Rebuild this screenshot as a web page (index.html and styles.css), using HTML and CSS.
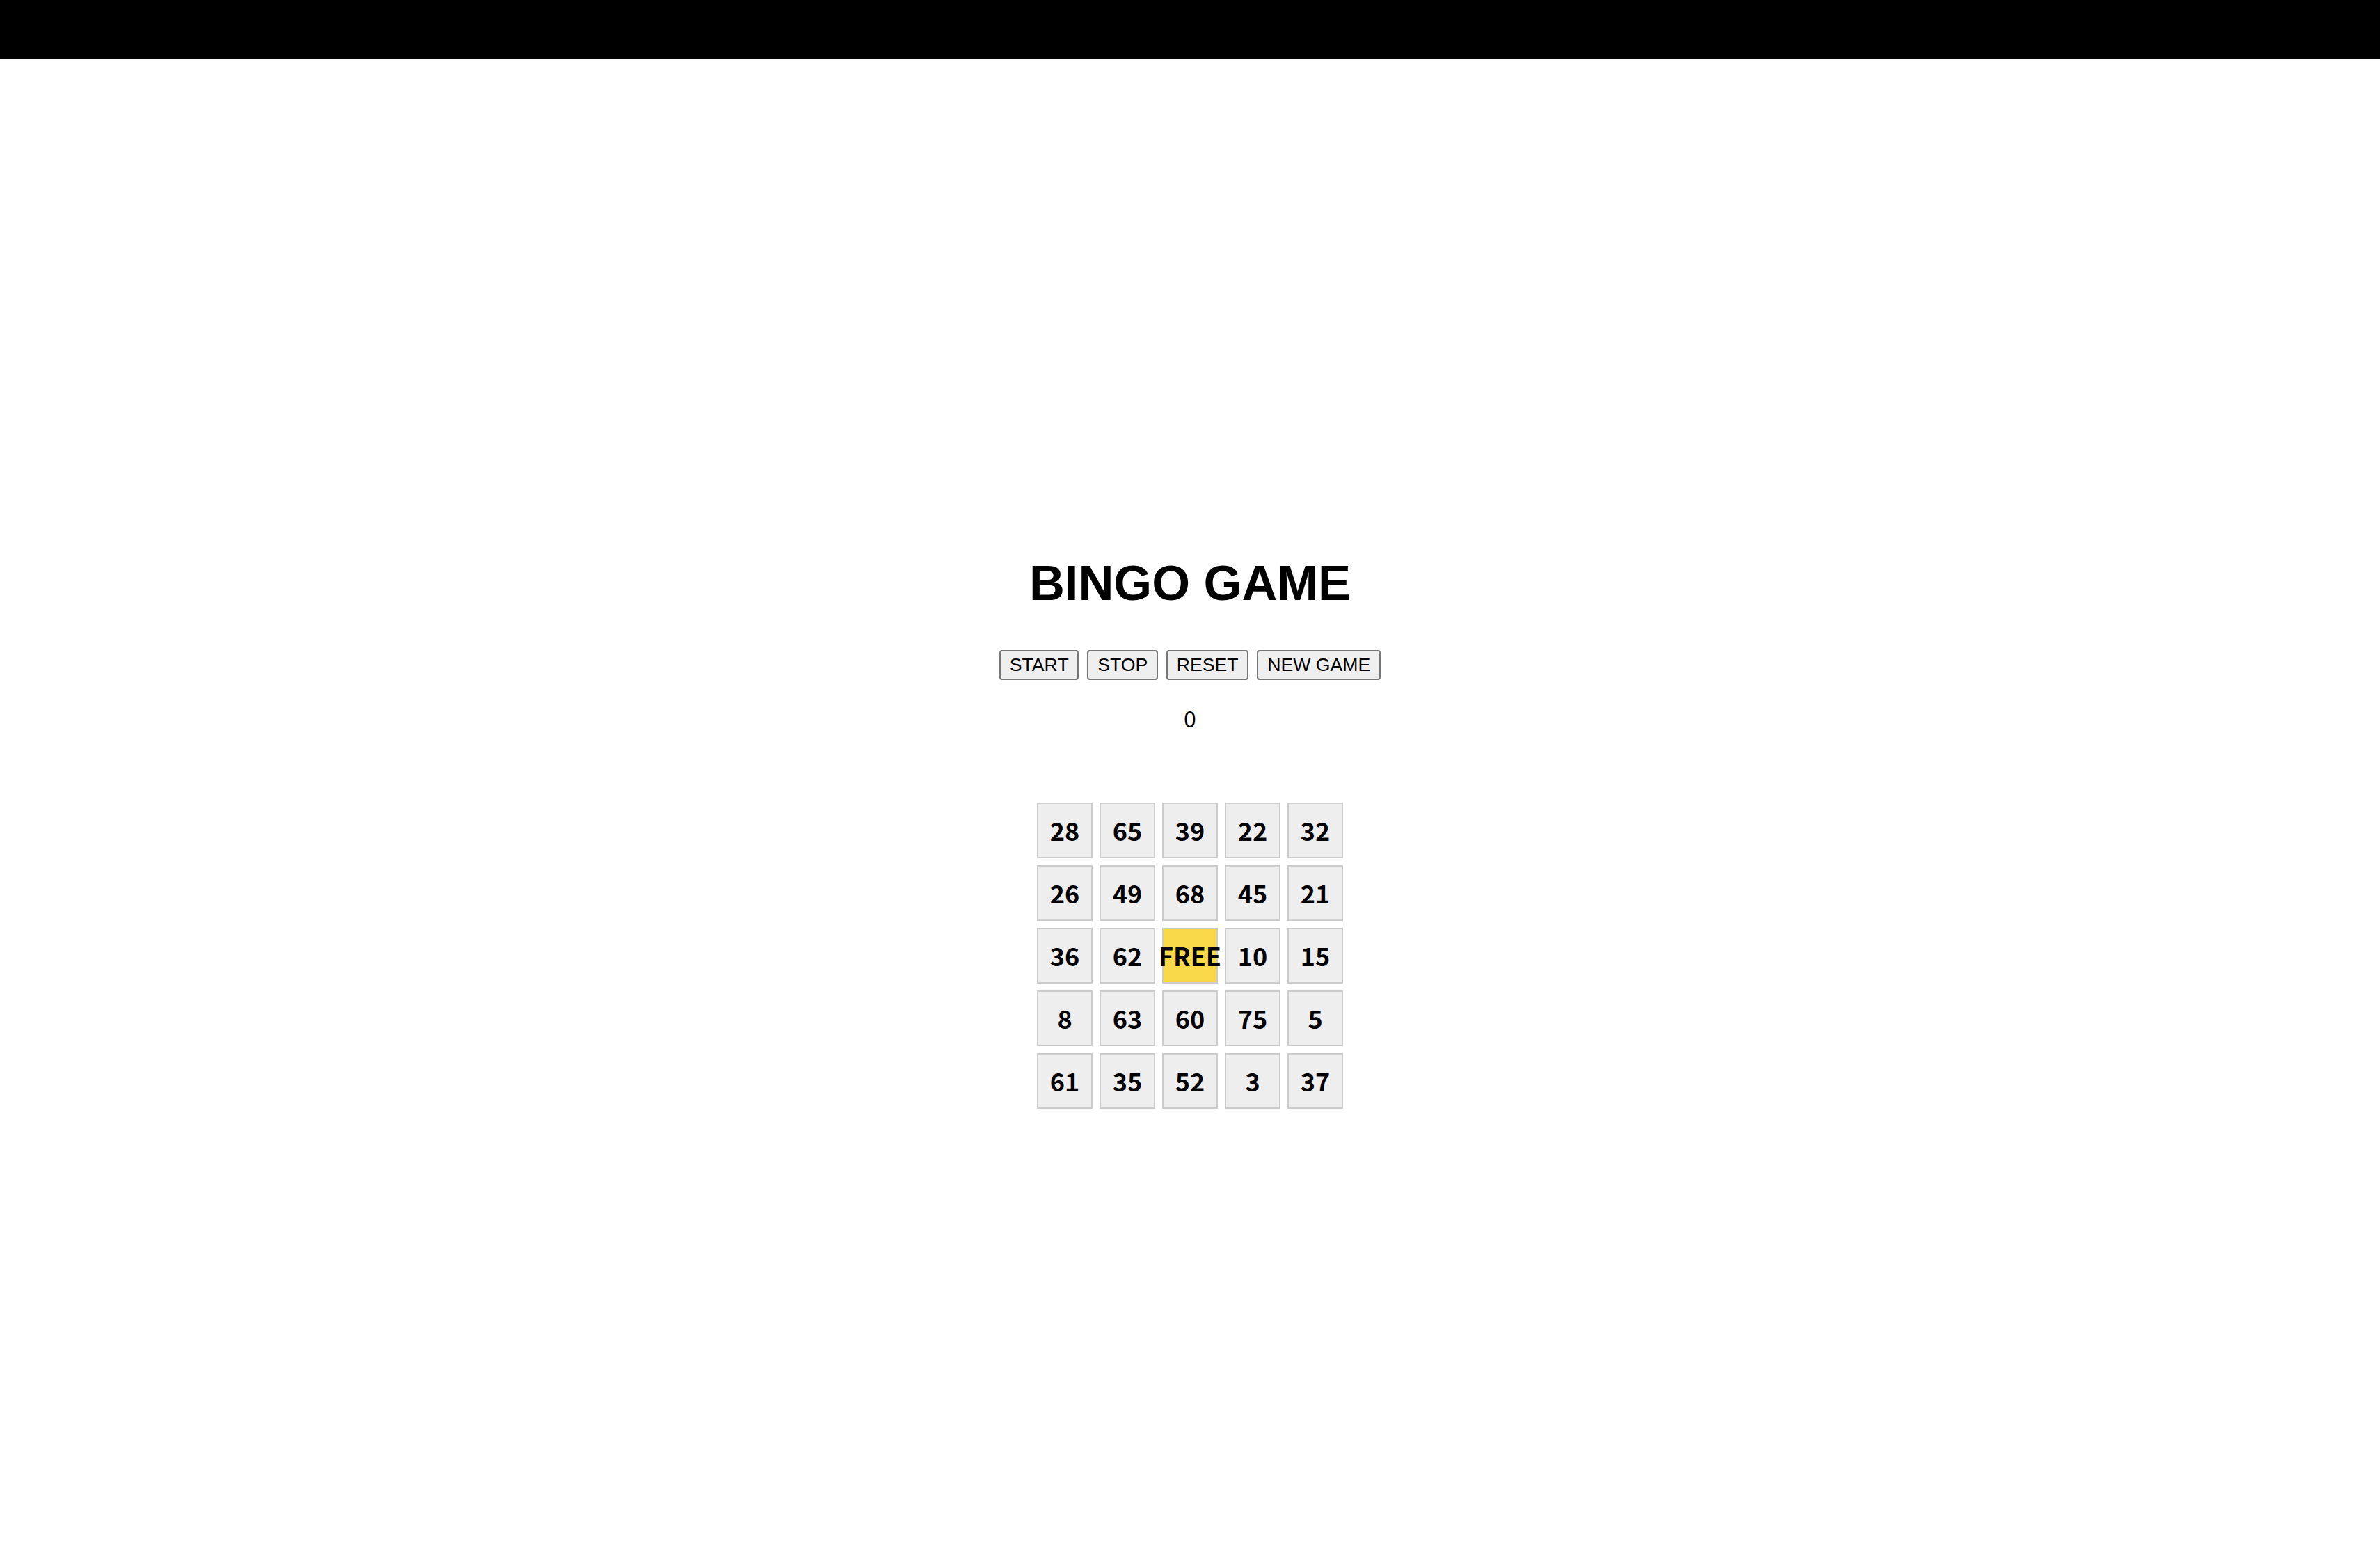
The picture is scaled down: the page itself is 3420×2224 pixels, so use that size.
FILE: index.html
```html
<!DOCTYPE html>
<html lang="en">
<head>
<meta charset="utf-8">
<title>BINGO GAME</title>
<link rel="stylesheet" href="styles.css">
</head>
<body>
<div class="topbar"></div>
<main class="game">
  <h1 class="title">BINGO GAME</h1>
  <div class="controls">
    <button class="btn">START</button>
    <button class="btn">STOP</button>
    <button class="btn">RESET</button>
    <button class="btn">NEW GAME</button>
  </div>
  <div class="counter">0</div>
  <div class="board">
    <div class="cell">28</div><div class="cell">65</div><div class="cell">39</div><div class="cell">22</div><div class="cell">32</div>
    <div class="cell">26</div><div class="cell">49</div><div class="cell">68</div><div class="cell">45</div><div class="cell">21</div>
    <div class="cell">36</div><div class="cell">62</div><div class="cell free">FREE</div><div class="cell">10</div><div class="cell">15</div>
    <div class="cell">8</div><div class="cell">63</div><div class="cell">60</div><div class="cell">75</div><div class="cell">5</div>
    <div class="cell">61</div><div class="cell">35</div><div class="cell">52</div><div class="cell">3</div><div class="cell">37</div>
  </div>
</main>
</body>
</html>
```

FILE: styles.css
```css
html, body {
  margin: 0;
  padding: 0;
  background: #ffffff;
  color: #000000;
}

.topbar {
  height: 85px;
  background: #000000;
}

.game {
  display: flex;
  flex-direction: column;
  align-items: center;
  padding-top: 713px;
}

.title {
  margin: 0;
  font-family: "Liberation Sans", Arial, sans-serif;
  font-weight: 700;
  font-size: 70.5px;
  line-height: 80px;
}

.controls {
  margin-top: 56px;
  display: flex;
  gap: 12px;
}

.btn {
  box-sizing: border-box;
  height: 43px;
  padding: 0 12.75px;
  font-family: "Liberation Sans", Arial, sans-serif;
  font-size: 26.67px;
  color: #000000;
  background: #efefef;
  border: 2px solid #767676;
  border-radius: 4px;
}

.counter {
  margin-top: 30px;
  font-family: "Noto Sans CJK JP", "Noto Sans", sans-serif;
  font-size: 32px;
  line-height: 48px;
}

.board {
  margin-top: 98px;
  display: grid;
  grid-template-columns: repeat(5, 80px);
  grid-auto-rows: 80px;
  gap: 10px;
}

.cell {
  box-sizing: border-box;
  display: flex;
  align-items: center;
  justify-content: center;
  padding-bottom: 3px;
  border: 2px solid #cccccc;
  background: #eeeeee;
  font-family: "Noto Sans CJK JP", "Noto Sans", sans-serif;
  font-weight: 700;
  font-size: 36px;
  line-height: 1;
  white-space: nowrap;
}

.free {
  background: #f9d849;
}
```
